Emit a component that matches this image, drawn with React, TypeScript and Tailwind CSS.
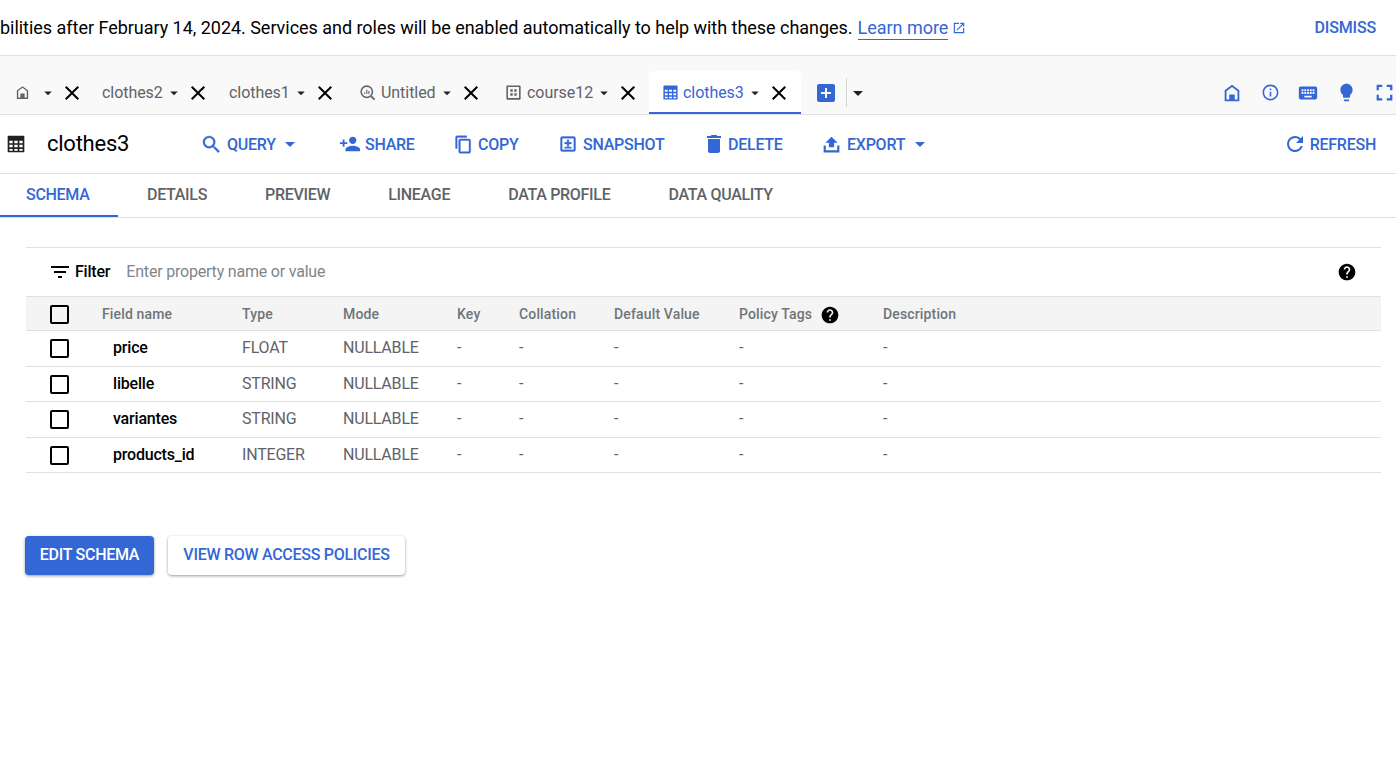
import React from "react";

const P = {
  home: "M12 3 4 9v12h16V9l-8-6zm6 16.2H6V10l6-4.6 6 4.6v9.2zM9 13.5h6v5.7H9z",
  caret: "M7 10l5 5 5-5z",
  close: "M19 6.41 17.59 5 12 10.59 6.41 5 5 6.41 10.59 12 5 17.59 6.41 19 12 13.41 17.59 19 19 17.59 13.41 12z",
  table: "M3 2h18a1 1 0 0 1 1 1v18a1 1 0 0 1-1 1H3a1 1 0 0 1-1-1V3a1 1 0 0 1 1-1zm1 6v3h4V8H4zm6 0v3h4V8h-4zm6 0v3h4V8h-4zM4 13v3h4v-3H4zm6 0v3h4v-3h-4zm6 0v3h4v-3h-4zM4 18v2h4v-2H4zm6 0v2h4v-2h-4zm6 0v2h4v-2h-4z",
  search: "M15.5 14h-.79l-.28-.27A6.47 6.47 0 0 0 16 9.5 6.5 6.5 0 1 0 9.5 16c1.61 0 3.09-.59 4.23-1.57l.27.28v.79l5 4.99L20.49 19l-4.99-5zm-6 0C7.01 14 5 11.99 5 9.5S7.01 5 9.5 5 14 7.01 14 9.5 11.99 14 9.5 14z",
  share: "M15 12c2.21 0 4-1.79 4-4s-1.79-4-4-4-4 1.79-4 4 1.79 4 4 4zm-9-2V7H4v3H1v2h3v3h2v-3h3v-2H6zm9 4c-2.67 0-8 1.34-8 4v2h16v-2c0-2.66-5.33-4-8-4z",
  copy: "M16 1H4c-1.1 0-2 .9-2 2v14h2V3h12V1zm3 4H8c-1.1 0-2 .9-2 2v14c0 1.1.9 2 2 2h11c1.1 0 2-.9 2-2V7c0-1.1-.9-2-2-2zm0 16H8V7h11v14z",
  snapshot: "M19 3H5c-1.1 0-2 .9-2 2v14c0 1.1.9 2 2 2h14c1.1 0 2-.9 2-2V5c0-1.1-.9-2-2-2zm0 16H5V5h14v14zM11 7v3H8v2h3v3h2v-3h3v-2h-3V7h-2zM8 15.5h8V17H8z",
  del: "M6 19c0 1.1.9 2 2 2h8c1.1 0 2-.9 2-2V7H6v12zM19 4h-3.5l-1-1h-5l-1 1H5v2h14V4z",
  export: "M12 3l-7 7h4v5h6v-5h4l-7-7zM3 13v8h18v-8h-2.5v5.5h-13V13H3z",
  refresh: "M17.65 6.35A7.96 7.96 0 0 0 12 4a8 8 0 1 0 7.74 10h-2.08A6 6 0 1 1 12 6c1.66 0 3.14.69 4.22 1.78L13 11h7V4l-2.35 2.35z",
  info: "M11 7h2v2h-2zm0 4h2v6h-2zm1-9C6.48 2 2 6.48 2 12s4.48 10 10 10 10-4.48 10-10S17.52 2 12 2zm0 18c-4.41 0-8-3.59-8-8s3.59-8 8-8 8 3.59 8 8-3.59 8-8 8z",
  keyboard: "M20 5H4c-1.1 0-1.99.9-1.99 2L2 17c0 1.1.9 2 2 2h16c1.1 0 2-.9 2-2V7c0-1.1-.9-2-2-2zm-9 3h2v2h-2V8zm0 3h2v2h-2v-2zM8 8h2v2H8V8zm0 3h2v2H8v-2zm-1 2H5v-2h2v2zm0-3H5V8h2v2zm9 7H8v-2h8v2zm0-4h-2v-2h2v2zm0-3h-2V8h2v2zm3 3h-2v-2h2v2zm0-3h-2V8h2v2z",
  bulb: "M9 21c0 .55.45 1 1 1h4c.55 0 1-.45 1-1v-1H9v1zm3-19C8.14 2 5 5.14 5 9c0 2.38 1.19 4.47 3 5.74V17c0 .55.45 1 1 1h6c.55 0 1-.45 1-1v-2.26c1.81-1.27 3-3.36 3-5.74 0-3.86-3.14-7-7-7z",
  full: "M7 14H5v5h5v-2H7v-3zm-2-4h2V7h3V5H5v5zm12 7h-3v2h5v-5h-2v3zM14 5v2h3v3h2V5h-5z",
  filter: "M10 18h4v-2h-4v2zM3 6v2h18V6H3zm3 7h12v-2H6v2z",
  help: "M12 2C6.48 2 2 6.48 2 12s4.48 10 10 10 10-4.48 10-10S17.52 2 12 2zm1 17h-2v-2h2v2zm2.07-7.75-.9.92C13.45 12.9 13 13.5 13 15h-2v-.5c0-1.1.45-2.1 1.17-2.83l1.24-1.26c.37-.36.59-.86.59-1.41 0-1.1-.9-2-2-2s-2 .9-2 2H8c0-2.21 1.79-4 4-4s4 1.79 4 4c0 .88-.36 1.68-.93 2.25z",
  open: "M19 19H5V5h7V3H3v18h18v-9h-2v7zM14 3v2h3.59l-9.83 9.83 1.41 1.41L19 6.41V10h2V3h-7z",
  plus: "M19 3H5c-1.1 0-2 .9-2 2v14c0 1.1.9 2 2 2h14c1.1 0 2-.9 2-2V5c0-1.1-.9-2-2-2zm-2 10h-4v4h-2v-4H7v-2h4V7h2v4h4v2z",
  course: "M4 3h16a1 1 0 0 1 1 1v16a1 1 0 0 1-1 1H4a1 1 0 0 1-1-1V4a1 1 0 0 1 1-1zm1 2v14h14V5H5zm3 3h3v3H8V8zm5 0h3v3h-3V8zm-5 5h3v3H8v-3zm5 0h3v3h-3v-3z",
};

function I({ d, className }: { d: string; className: string }) {
  return (
    <svg viewBox="0 0 24 24" className={`shrink-0 ${className}`} fill="currentColor" aria-hidden="true">
      <path d={d} fillRule="evenodd" />
    </svg>
  );
}

function QueryIcon({ className }: { className: string }) {
  return (
    <svg viewBox="0 0 24 24" className={`shrink-0 ${className}`} fill="none" stroke="currentColor" aria-hidden="true">
      <circle cx="11" cy="11" r="8" strokeWidth="2.2" />
      <path d="M17 17l5 5" strokeWidth="2.6" />
      <path d="M8 14v-2M11 14V8M14 14v-4" strokeWidth="1.6" />
    </svg>
  );
}

function Tab({ children, label, w, pl, active }: { children?: React.ReactNode; label?: string; w: string; pl: string; active?: boolean }) {
  return (
    <div className={`flex h-[43px] items-center rounded-t-[5px] border-b-2 pt-[2px] ${w} ${pl} ${active ? "border-[#3367d6] bg-white text-[#3367d6]" : "border-transparent text-[#5f6368]"}`}>
      {children}
      {label ? <span className="text-[16px] leading-none tracking-[-0.05px]">{label}</span> : null}
      <I d={P.caret} className={`h-[18px] w-[18px] text-[#202124] ${label ? "ml-[2px]" : "ml-0"}`} />
      <I d={P.close} className="ml-[3px] h-[24px] w-[24px] text-black" />
    </div>
  );
}

function Act({ d, icon, gap, label, caret, w }: { d: string; icon: string; gap: string; label: string; caret?: boolean; w: string }) {
  return (
    <div className={`flex items-center text-[#3367d6] ${w}`}>
      <I d={d} className={icon} />
      <span className={`${gap} pt-[1px] text-[16px] font-medium leading-none tracking-[-0.25px]`}>{label}</span>
      {caret ? <I d={P.caret} className="ml-[2.5px] h-[24px] w-[24px]" /> : null}
    </div>
  );
}

const COLS = "grid grid-cols-[76px_140px_101px_114px_62px_95px_125px_144px_1fr] items-center";

function Row({ name, type, h, pb }: { name: string; type: string; h: string; pb: string }) {
  const rest = [type, "NULLABLE", "-", "-", "-", "-", "-"];
  return (
    <div className={`${COLS} ${h} border-b border-[#e0e0e0] text-[16px] tracking-[-0.2px] text-[#5f6368]`}>
      <div className="pl-[24px]">
        <div className="h-[19px] w-[19px] rounded-[2px] border-2 border-black" />
      </div>
      <div className={`${pb} pl-[11px] font-medium text-black`}>{name}</div>
      {rest.map((c, i) => (
        <div key={i} className={pb}>{c}</div>
      ))}
    </div>
  );
}

export default function App() {
  const tabs = ["DETAILS", "PREVIEW", "LINEAGE", "DATA PROFILE", "DATA QUALITY"];
  return (
    <div className="h-[763px] w-[1396px] overflow-hidden bg-white font-['Roboto',sans-serif] text-black">
      <div className="flex h-[56px] items-center justify-between border-b border-[#e0e0e0] pr-[20px]">
        <div className="flex items-center whitespace-nowrap text-[18px] leading-none tracking-[-0.03px]">
          <span>bilities after February 14, 2024. Services and roles will be enabled automatically to help with these changes.</span>
          <span className="relative ml-[5px] text-[#3367d6]">
            Learn more
            <span className="absolute bottom-[-3px] left-0 h-px w-full bg-[#3367d6]" />
          </span>
          <I d={P.open} className="ml-[4px] h-[14px] w-[14px] text-[#3367d6]" />
        </div>
        <span className="text-[16px] font-medium leading-none tracking-[-0.15px] text-[#3367d6]">DISMISS</span>
      </div>

      <div className="flex h-[59px] items-end justify-between border-b border-[#e0e0e0] bg-[#f9f9f9]">
        <div className="flex items-end">
          <Tab w="w-[88px]" pl="pl-[14px]">
            <I d={P.home} className="mr-[8px] h-[17px] w-[17px]" />
          </Tab>
          <Tab label="clothes2" w="w-[127px]" pl="pl-[14px]" />
          <Tab label="clothes1" w="w-[130px]" pl="pl-[14px]" />
          <Tab label="Untitled" w="w-[146px]" pl="pl-[14px]">
            <QueryIcon className="mr-[5px] h-[17px] w-[17px]" />
          </Tab>
          <Tab label="course12" w="w-[158px]" pl="pl-[13px]">
            <I d={P.course} className="mr-[4px] h-[19px] w-[19px]" />
          </Tab>
          <Tab label="clothes3" w="w-[152px]" pl="pl-[13px]" active>
            <I d={P.table} className="mr-[4px] h-[17px] w-[17px]" />
          </Tab>
          <div className="flex h-[43px] items-center">
            <I d={P.plus} className="ml-[13px] h-[24px] w-[24px] text-[#3367d6]" />
            <div className="ml-[8px] h-[29px] w-px bg-[#d5d5d5]" />
            <I d={P.caret} className="ml-[-1px] h-[24px] w-[24px] text-[#202124]" />
          </div>
        </div>
        <div className="flex h-[43px] items-center gap-[14px] text-[#3367d6]">
          <div className="flex w-[24px] justify-center"><I d={P.home} className="h-[22px] w-[22px]" /></div>
          <div className="flex w-[24px] justify-center"><I d={P.info} className="h-[19px] w-[19px]" /></div>
          <div className="flex w-[24px] justify-center"><I d={P.keyboard} className="h-[22px] w-[22px]" /></div>
          <div className="flex w-[24px] justify-center"><I d={P.bulb} className="h-[21px] w-[21px]" /></div>
          <div className="flex w-[24px] justify-center"><I d={P.full} className="h-[27px] w-[27px]" /></div>
        </div>
      </div>

      <div className="flex h-[59px] items-center border-b border-[#e0e0e0] pr-[20px]">
        <I d={P.table} className="ml-[6px] h-[20px] w-[20px] text-[#202124]" />
        <span className="ml-[21px] w-[153px] text-[22px] leading-none tracking-[-0.25px]">clothes3</span>
        <Act d={P.search} icon="h-[23px] w-[23px] stroke-current stroke-[0.3px]" gap="ml-[4px]" label="QUERY" caret w="w-[139px]" />
        <Act d={P.share} icon="h-[22px] w-[22px]" gap="ml-[4px]" label="SHARE" w="w-[115px]" />
        <Act d={P.copy} icon="h-[19px] w-[19px] stroke-current stroke-[0.5px]" gap="ml-[5px]" label="COPY" w="w-[104px]" />
        <Act d={P.snapshot} icon="h-[20px] w-[20px] stroke-current stroke-[0.4px]" gap="ml-[5px]" label="SNAPSHOT" w="w-[144px]" />
        <Act d={P.del} icon="h-[24px] w-[24px]" gap="ml-[2px]" label="DELETE" w="w-[119px]" />
        <Act d={P.export} icon="h-[21px] w-[21px]" gap="ml-[5px]" label="EXPORT" caret w="w-[120px]" />
        <div className="ml-auto">
          <Act d={P.refresh} icon="h-[24px] w-[24px]" gap="ml-[3px]" label="REFRESH" w="" />
        </div>
      </div>

      <div className="flex h-[44px] items-stretch border-b border-[#e0e0e0] text-[16px] font-medium tracking-[-0.3px]">
        <div className="flex w-[118px] items-center border-b-2 border-[#3367d6] pl-[26px] text-[#3367d6]">SCHEMA</div>
        <div className="flex items-center gap-[58px] pb-[1px] pl-[29px] text-[#5f6368]">
          {tabs.map((t) => (
            <span key={t}>{t}</span>
          ))}
        </div>
      </div>

      <div className="ml-[26px] mr-[15px] mt-[29px]">
        <div className="flex h-[49px] items-center border-t border-[#e0e0e0] pl-[22px] pr-[24px] text-[16px] tracking-[-0.2px]">
          <I d={P.filter} className="h-[24px] w-[24px]" />
          <span className="ml-[3px] font-medium">Filter</span>
          <span className="ml-[16px] text-[#80868b]">Enter property name or value</span>
          <I d={P.help} className="ml-auto h-[20px] w-[20px]" />
        </div>
        <div className={`${COLS} h-[35px] border-y border-[#e0e0e0] bg-[#f4f4f4] pt-[2px] text-[14px] font-medium tracking-[0.15px] text-[#70757a]`}>
          <div className="pl-[24px]">
            <div className="h-[19px] w-[19px] rounded-[2px] border-2 border-black" />
          </div>
          <div>Field name</div>
          <div>Type</div>
          <div>Mode</div>
          <div>Key</div>
          <div>Collation</div>
          <div>Default Value</div>
          <div className="flex items-center">
            <span>Policy Tags</span>
            <I d={P.help} className="ml-[8px] h-[20px] w-[20px] text-black" />
          </div>
          <div>Description</div>
        </div>
        <Row name="price" type="FLOAT" h="h-[36px]" pb="pb-[2px]" />
        <Row name="libelle" type="STRING" h="h-[35px]" pb="pb-0" />
        <Row name="variantes" type="STRING" h="h-[36px]" pb="pb-[2px]" />
        <Row name="products_id" type="INTEGER" h="h-[35px]" pb="pb-0" />
      </div>

      <div className="ml-[25px] mt-[63px] flex gap-[14px] text-[16px] font-medium tracking-[-0.28px]">
        <div className="flex h-[39px] w-[129px] items-center justify-center rounded-[4px] bg-[#3367d6] pb-[2px] text-white shadow-[0_1px_3px_rgba(0,0,0,0.4)]">EDIT SCHEMA</div>
        <div className="flex h-[39px] w-[237px] items-center justify-center rounded-[4px] bg-white pb-[2px] text-[#3367d6] shadow-[0_1px_3px_rgba(0,0,0,0.4)]">VIEW ROW ACCESS POLICIES</div>
      </div>
    </div>
  );
}
